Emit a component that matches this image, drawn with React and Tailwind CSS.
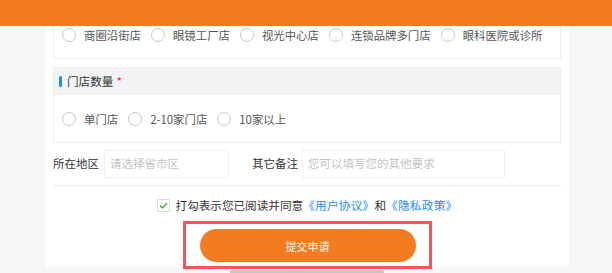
import React from "react";

const font = { fontFamily: '"Noto Sans CJK SC", "Noto Sans", sans-serif' };

function Radio({ label, last }) {
  return (
    <div className={"flex items-center " + (last ? "" : "mr-[10px]")}>
      <span className="w-[14px] h-[14px] rounded-full border border-[#c8c8c8] bg-white mr-[8px]" />
      <span className="text-[11.4px] leading-[18px] text-[#555]">{label}</span>
    </div>
  );
}

export default function App() {
  const types = ["商圈沿街店", "眼镜工厂店", "视光中心店", "连锁品牌多门店", "眼科医院或诊所"];
  const counts = ["单门店", "2-10家门店", "10家以上"];
  return (
    <div className="w-[612px] h-[273px] bg-[#f7f7f7] overflow-hidden" style={font}>
      <div className="h-[26px] bg-[#f47c20]" />
      <div className="ml-[46px] w-[523px] h-[241px] bg-white pl-[7px] pr-[8px]">
        {/* card 1 */}
        <div className="h-[33px] border border-t-0 border-[#eeeeee] flex items-start pl-[8px] pt-0">
          <div className="flex items-center h-[18px]">
            {types.map((t, i) => (
              <Radio key={t} label={t} last={i === types.length - 1} />
            ))}
          </div>
        </div>
        {/* card 2 */}
        <div className="mt-[8px] border border-[#eeeeee]">
          <div className="h-[27px] bg-[#f2f3f5] flex items-center pl-[5px]">
            <span className="w-[3px] h-[11px] rounded-full bg-[#1a8cff] mr-[5px]" />
            <span className="text-[11.6px] text-[#333]">门店数量</span>
            <span className="text-[11.6px] text-[#f5222d] ml-[3px]">*</span>
          </div>
          <div className="h-[47px] flex items-center pl-[8px]">
            {counts.map((t, i) => (
              <Radio key={t} label={t} last={i === counts.length - 1} />
            ))}
          </div>
        </div>
        {/* form row */}
        <div className="mt-[7px] h-[28px] flex items-center">
          <span className="text-[11.5px] text-[#333] w-[51px]">所在地区</span>
          <div className="w-[125px] h-[28px] border border-[#f0f0f0] flex items-center pl-[5px] text-[11.5px] text-[#c4c4c4]">
            请选择省市区
          </div>
          <span className="text-[11.5px] text-[#333] w-[73px] text-right pr-[4px]">其它备注</span>
          <div className="w-[203px] h-[28px] border border-[#f0f0f0] flex items-center pl-[5px] text-[11.5px] text-[#c4c4c4]">
            您可以填写您的其他要求
          </div>
        </div>
        <div className="mt-[7px] border-t border-[#eeeeee]" />
        {/* agreement */}
        <div className="mt-[11px] flex items-center justify-center">
          <span className="w-[13px] h-[13px] border border-[#dddddd] flex items-center justify-center mr-[6px]">
            <svg width="9" height="7" viewBox="0 0 9 7">
              <path d="M1 3.5 L3.5 6 L8 1" fill="none" stroke="#3cb043" strokeWidth="1.3" />
            </svg>
          </span>
          <span className="text-[11.6px] text-[#333]">打勾表示您已阅读并同意</span>
          <span className="text-[11.6px] text-[#1a8cff] tracking-[0.3px]">《用户协议》</span>
          <span className="text-[11.6px] text-[#333]">和</span>
          <span className="text-[11.6px] text-[#1a8cff] tracking-[0.3px]">《隐私政策》</span>
        </div>
        {/* submit */}
        <div className="mt-[7px] flex justify-center">
          <div className="w-[249px] h-[48px] border-[3px] border-[#f5545a] pt-[5px] pl-[14px]">
            <div className="w-[216px] h-[33px] rounded-full bg-[#f47c20] flex items-center justify-center text-[11px] text-white">
              提交申请
            </div>
          </div>
        </div>
      </div>
      <div className="ml-[230px] mt-[3px] w-[154px] h-[4px] rounded-t-[2px] bg-[#c6c6c6]" />
    </div>
  );
}
